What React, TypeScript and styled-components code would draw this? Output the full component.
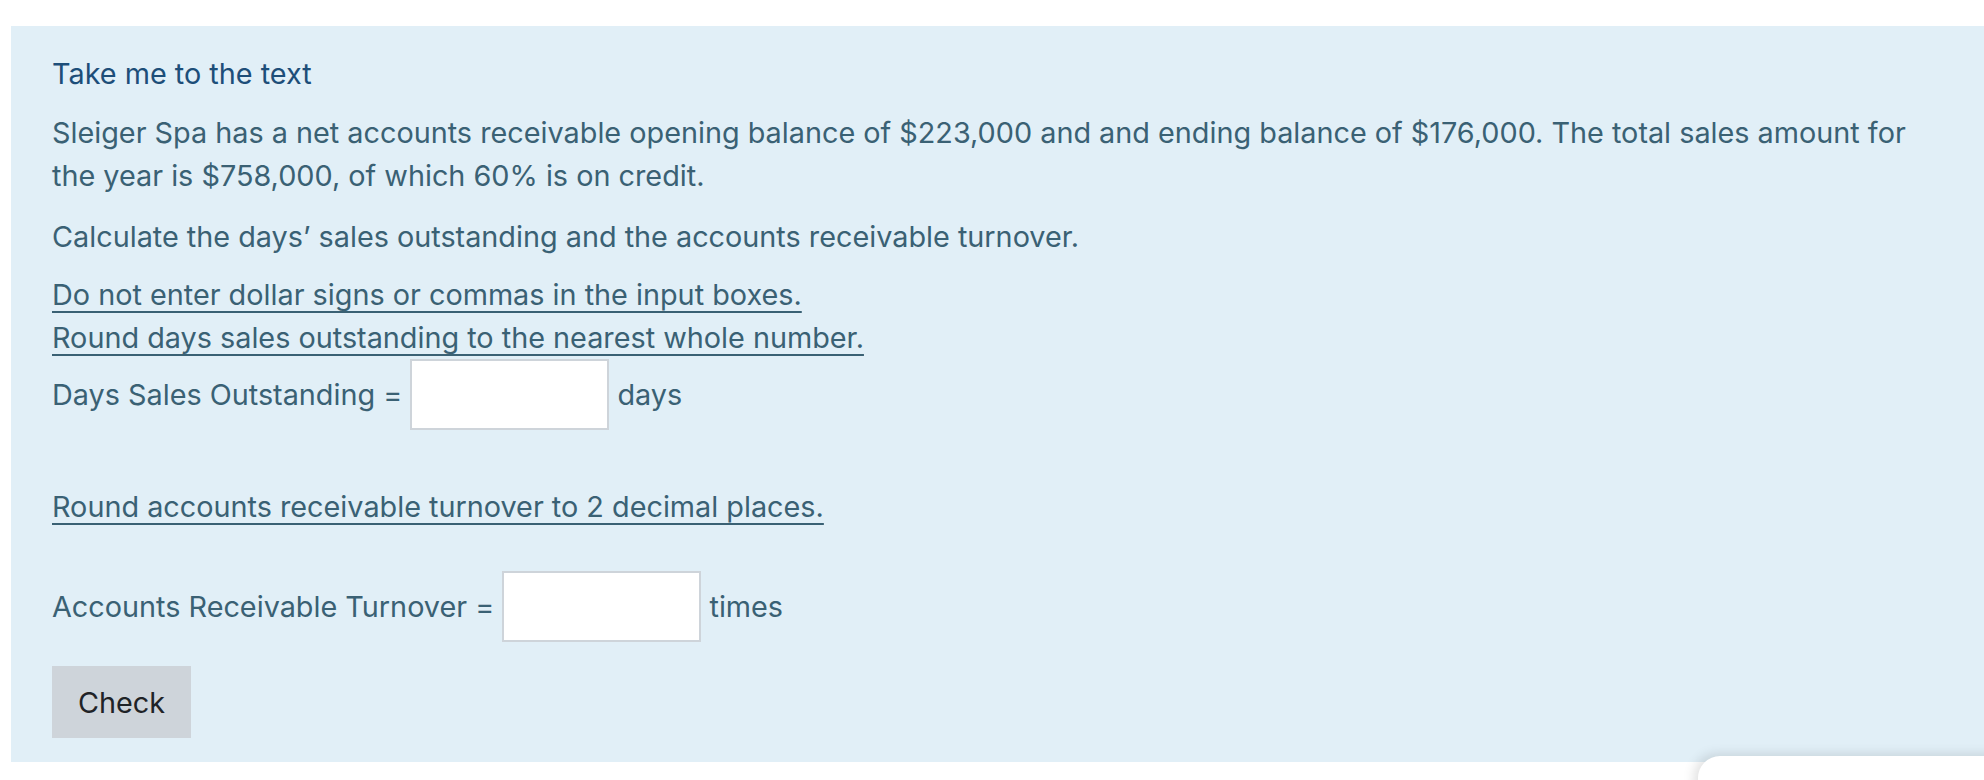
import React from "react";
import styled, { createGlobalStyle } from "styled-components";

const Global = createGlobalStyle`
  html, body { margin: 0; padding: 0; background: #ffffff; }
  body { font-family: Inter, "Noto Sans", sans-serif; }
  #root { width: 1984px; height: 780px; overflow: hidden; position: relative; }
`;

const Page = styled.div`
  padding: 26px 0 0 11px;
`;

const Panel = styled.div`
  background: #e1eff7;
  padding: 26px 41px 24px 41px;
  color: #3a6174;
  font-size: 28.8px;
  line-height: 43px;
`;

const Link = styled.a`
  display: block;
  color: #1d4e79;
  text-decoration: none;
  margin: 0 0 16px;
`;

const Para = styled.p<{ $mt?: number }>`
  margin: ${(p) => p.$mt ?? 0}px 0 0;
`;

const Note = styled.span`
  display: block;
  text-decoration: underline;
  text-underline-offset: 6px;
  text-decoration-thickness: 2px;
`;

const Field = styled.input`
  box-sizing: border-box;
  width: 199px;
  height: 71px;
  border: 2px solid #ced4da;
  background: #ffffff;
  font: inherit;
  padding: 0 12px;
  margin: 0;
  vertical-align: baseline;
  color: #495057;
`;

const CheckButton = styled.button`
  display: block;
  margin-top: 24px;
  width: 139px;
  height: 72px;
  border: none;
  background: #ced4da;
  color: #1f2327;
  font-family: inherit;
  font-size: 28.8px;
  padding: 0;
`;

const FloatCard = styled.div`
  position: absolute;
  left: 1698px;
  top: 756px;
  width: 320px;
  height: 120px;
  background: #ffffff;
  border-radius: 22px;
  box-shadow: -4px -2px 12px rgba(0, 0, 0, 0.12);
`;

export default function App() {
  return (
    <>
      <Global />
      <Page>
        <Panel>
          <Link href="#">Take me to the text</Link>
          <Para>
            Sleiger Spa has a net accounts receivable opening balance of $223,000 and and ending balance of
            $176,000. The total sales amount for the year is $758,000, of which 60% is on credit.
          </Para>
          <Para $mt={18}>Calculate the days’ sales outstanding and the accounts receivable turnover.</Para>
          <Para $mt={15}>
            <Note>Do not enter dollar signs or commas in the input boxes.</Note>
            <Note>Round days sales outstanding to the nearest whole number.</Note>
            Days Sales Outstanding = <Field type="text" aria-label="Days Sales Outstanding" /> days
          </Para>
          <Para $mt={55}>
            <Note>Round accounts receivable turnover to 2 decimal places.</Note>
          </Para>
          <Para $mt={43}>
            Accounts Receivable Turnover = <Field type="text" aria-label="Accounts Receivable Turnover" /> times
          </Para>
          <CheckButton type="button">Check</CheckButton>
        </Panel>
      </Page>
      <FloatCard />
    </>
  );
}
